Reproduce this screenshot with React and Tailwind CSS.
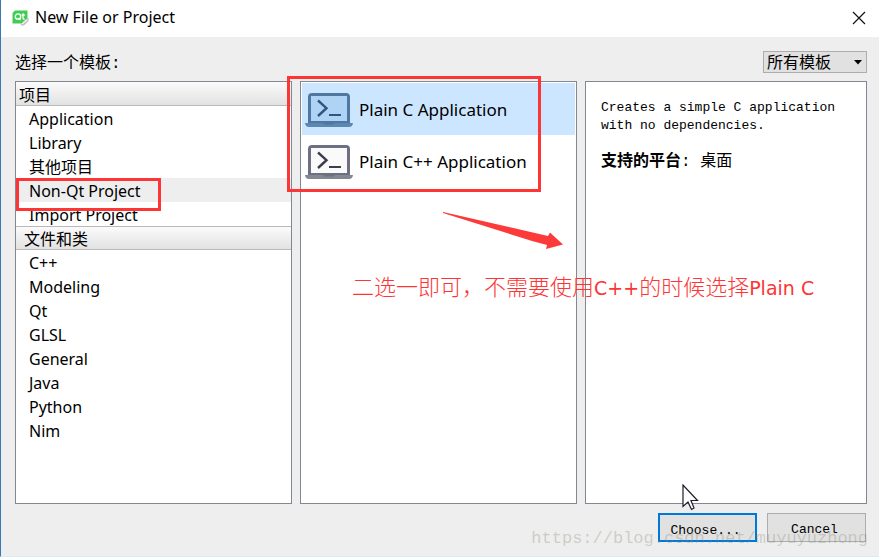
import React from 'react';

const categories = [
    {
        title: '项目',
        headerClass: 'pl-[3px] border-b leading-[27px]',
        items: ['Application', 'Library', '其他项目', 'Non-Qt Project', 'Import Project']
    },
    {
        title: '文件和类',
        headerClass: 'pl-[8px] border-y leading-[25px]',
        items: ['C++', 'Modeling', 'Qt', 'GLSL', 'General', 'Java', 'Python', 'Nim']
    }
];

const templates = ['Plain C Application', 'Plain C++ Application'];

const QtIcon = () => (
    <svg width="18" height="16" viewBox="0 0 18 16" aria-hidden="true">
        <path d="M3 0.5H15.5V10L12.5 13.5H0.5V3Z" fill="#41cd52" />
        <circle cx="6" cy="6.5" r="2.7" fill="none" stroke="#fff" strokeWidth="1.3" />
        <path d="M6.5 8L8.5 10M11 3.2V8.2Q11 9.3 12.6 9M9.6 5H12.8" fill="none" stroke="#fff" strokeWidth="1.3" />
        <path d="M8.5 14.5L13 9.5L17 8.2L16.5 11L12.5 15Q10 16.5 8.5 14.5Z" fill="#bfbfbf" />
        <path d="M10 14L15.5 9.5" stroke="#f3f3f3" strokeWidth="1.2" />
    </svg>
);

const TerminalIcon = ({ selected }) => {
    const frame = selected ? '#50779f' : '#6d7080';
    const base = selected ? '#5d87b3' : '#848793';
    const ink = selected ? '#31557f' : '#3b3c50';
    return (
        <svg width="48" height="48" viewBox="0 -2 48 48" aria-hidden="true">
            <path d="M3 38V10Q3 6 7 6H41Q45 6 45 10V38Z" fill={frame} />
            <path d="M6 9H42V34H6Z" fill={selected ? '#afd3f4' : '#fafafb'} />
            <path d="M0 36H48Q47.5 40 44 40H4Q0.5 40 0 36Z" fill={base} />
            <path d="M18 36H30L28.5 37.5H19.5Z" fill={frame} />
            <path d="M13 13.5L21.5 21.2L13 29" fill="none" stroke={ink} strokeWidth="2.4" />
            <path d="M24 28H36" stroke={ink} strokeWidth="2" />
        </svg>
    );
};

const CategoryList = ({ selected }) => (
    <nav className="min-w-0 bg-white border border-[#828790]">
        {categories.map((group) => (
            <section key={group.title}>
                <h2 className={`h-6 border-[#b9b9b9] bg-linear-to-b from-[#fbfbfb] to-[#e2e2e2] ${group.headerClass}`}>
                    {group.title}
                </h2>
                <ul>
                    {group.items.map((item) => (
                        <li key={item} className="relative">
                            <button
                                type="button"
                                className={`block w-full h-6 pl-[13px] pt-0.5 leading-[22px] text-left ${item === selected ? 'bg-[#eeeeee]' : ''}`}
                            >
                                {item}
                            </button>
                            {item === selected && (
                                <span className="absolute left-0 top-0 z-10 w-[145px] h-[33px] border-3 border-[#fd3535] pointer-events-none" />
                            )}
                        </li>
                    ))}
                </ul>
            </section>
        ))}
    </nav>
);

const TemplateList = ({ selected }) => (
    <div className="relative z-10 min-w-0 p-px bg-white border border-[#828790]">
        <ul>
            {templates.map((name) => (
                <li key={name}>
                    <button
                        type="button"
                        className={`flex items-center w-full h-[52px] gap-1.5 pl-[3px] text-[17px] ${name === selected ? 'bg-[#cde6ff]' : ''}`}
                    >
                        <TerminalIcon selected={name === selected} />
                        <span className="pt-0.5 whitespace-nowrap">{name}</span>
                    </button>
                </li>
            ))}
        </ul>

        {/* Red notes drawn over the dialog */}
        <div className="absolute -left-[14px] -top-[6px] w-[254px] h-[116px] border-3 border-[#fd3535] pointer-events-none" />
        <svg className="absolute left-[142px] top-[129px] pointer-events-none" width="121" height="40" viewBox="0 0 121 40" aria-hidden="true">
            <path d="M0 1L105 25L107 21.5L120 33.5L103 38L104 34Q88 30 73 25L0 2Z" fill="#fd3a3a" />
        </svg>
        <p className="absolute left-[51px] top-[188px] whitespace-nowrap text-[22px] leading-[30px] font-light text-[#fd3535] font-['Noto_Sans_CJK_SC',sans-serif] pointer-events-none">
            二选一即可，不需要使用
            <span className="text-[19px] font-normal font-['DejaVu_Sans',sans-serif]">C++</span>
            的时候选择
            <span className="text-[19px] font-normal font-['DejaVu_Sans',sans-serif]">Plain C</span>
        </p>
    </div>
);

const Description = () => (
    <div className="min-w-0 px-[15px] py-[17px] bg-white border border-[#828790] font-['Liberation_Mono','Noto_Sans_CJK_SC',monospace]">
        <p className="text-[13px] leading-[18px]">
            Creates a simple C application with no dependencies.
        </p>
        <p className="mt-[17px] leading-5">
            <strong>支持的平台</strong>: 桌面
        </p>
    </div>
);

export default function App() {
    return (
        <div className="relative flex flex-col min-h-screen overflow-hidden bg-[#eeeeee] border-l border-l-[#3a78b5] border-b border-b-[#c5f5fb] text-black text-[16px] leading-6 font-['Noto_Sans','Noto_Sans_CJK_SC',sans-serif]">
            <header className="flex items-center h-[37px] pb-0.5 pl-[11px] pr-[13px] gap-[5px] bg-white">
                <QtIcon />
                <h1 className="flex-1 pb-0.5">New File or Project</h1>
                <button type="button" aria-label="Close">
                    <svg width="14" height="14" viewBox="0 0 14 14" aria-hidden="true">
                        <path d="M1 1L13 13M13 1L1 13" stroke="#111" strokeWidth="1.2" />
                    </svg>
                </button>
            </header>

            <main className="flex flex-col flex-1 pl-[14px] pr-3 py-[14px]">
                <div className="flex items-center justify-between h-[22px] mb-2">
                    <label htmlFor="template-filter" className="pt-1 font-['Liberation_Mono','Noto_Sans_CJK_SC',monospace]">
                        选择一个模板:
                    </label>
                    <div className="relative">
                        <select
                            id="template-filter"
                            className="block appearance-none w-[104px] h-[22px] pl-[3px] leading-5 bg-[#e1e1e1] border border-[#adadad]"
                        >
                            <option>所有模板</option>
                        </select>
                        <svg className="absolute right-[5px] top-[9px] pointer-events-none" width="8" height="5" viewBox="0 0 8 5" aria-hidden="true">
                            <path d="M0 0H8L4 4.5Z" fill="#000" />
                        </svg>
                    </div>
                </div>

                <div className="grid flex-1 grid-cols-[277fr_277fr_282fr] gap-2">
                    <CategoryList selected="Non-Qt Project" />
                    <TemplateList selected="Plain C Application" />
                    <Description />
                </div>

                <div className="relative flex justify-end gap-2.5 mt-[9px] pr-px text-[13px] font-['Liberation_Mono',monospace]">
                    <button type="button" className="w-[99px] h-[29px] pt-1 pr-1 bg-[#e1e1e1] border-2 border-[#0078d7]">
                        Choose...
                    </button>
                    <button type="button" className="w-[99px] h-[29px] pt-1 pr-1 bg-[#e1e1e1] border border-[#adadad]">
                        Cancel
                    </button>

                    {/* Mouse pointer */}
                    <svg className="absolute right-[168px] -top-[29px] z-20 pointer-events-none" width="17" height="27" viewBox="0 0 17 27" aria-hidden="true">
                        <path d="M1 1V22.5L6 18L9.5 25.5L12 24L9 16.5H15.5Z" fill="#fff" stroke="#1c1c2c" strokeWidth="1.2" />
                    </svg>
                    <span className="absolute -right-px top-3.5 text-[17px] leading-6 text-[#8c8c78]/35 pointer-events-none">
                        https://blog.csdn.net/muyuyuzhong
                    </span>
                </div>
            </main>
        </div>
    );
}
